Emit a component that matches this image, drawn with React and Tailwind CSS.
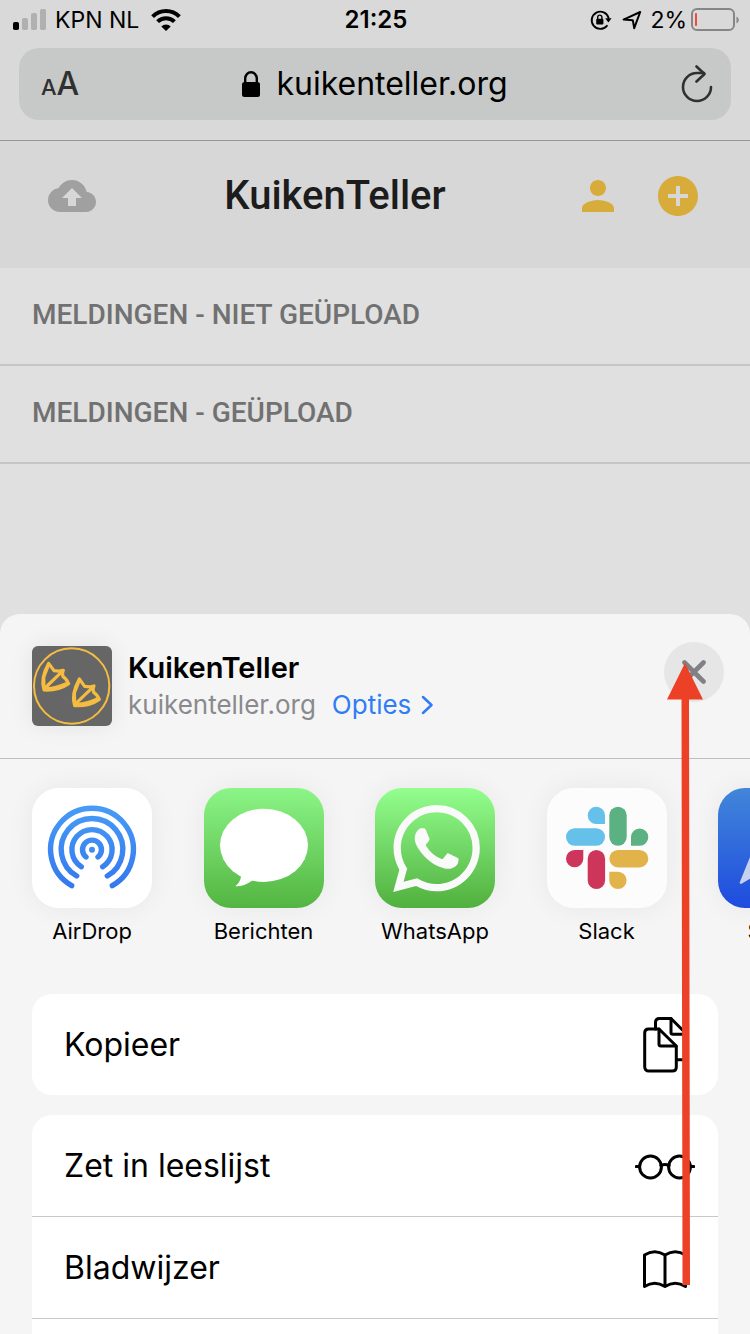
import { MdAddCircle, MdCloudUpload, MdPerson } from "react-icons/md";
import { SiWhatsapp } from "react-icons/si";

function StatusBar() {
  return (
    <div className="grid h-10 grid-cols-[1fr_auto_1fr] items-center pr-[11px] pl-[13px] text-[23px] text-black">
      <div className="flex items-center gap-2">
        <svg className="h-[22px] w-[34px]" viewBox="0 0 34 22" aria-hidden="true">
          <rect x="0" y="13" width="6" height="8" rx="1.8" />
          <g fill="#b0b0b0">
            <rect x="9" y="9" width="6" height="12" rx="1.8" />
            <rect x="18" y="4" width="6" height="17" rx="1.8" />
            <rect x="27" y="0" width="6" height="21" rx="1.8" />
          </g>
        </svg>
        <span>KPN NL</span>
        <svg className="ml-1 h-[22px] w-[30px]" viewBox="0 0 30 22" aria-hidden="true">
          <g fill="none" stroke="#000" strokeWidth="4">
            <path d="M1.6 7.6A19 19 0 0 1 28.4 7.6" />
            <path d="M6.6 12.6A12 12 0 0 1 23.4 12.6" />
          </g>
          <path d="M15 22L10.3 17.4A6.8 6.8 0 0 1 19.7 17.4Z" />
        </svg>
      </div>
      <span className="text-2xl font-semibold">21:25</span>
      <div className="flex items-center justify-end">
        <svg className="mr-2.5 h-[22px] w-[22px]" viewBox="0 0 22 22" aria-hidden="true">
          <path d="M16.9 16.8A8.6 8.6 0 1 1 18.6 9" fill="none" stroke="#000" strokeWidth="1.9" strokeLinecap="round" />
          <path d="M15.2 9.2h6.4l-3.2 4.4z" />
          <rect x="6.2" y="9.8" width="7.2" height="5.6" rx="1" />
          <path d="M7.7 10V8.2a2.1 2.1 0 0 1 4.2 0V10" fill="none" stroke="#000" strokeWidth="1.4" />
        </svg>
        <svg className="mr-2 h-5 w-5" viewBox="0 0 20 20" aria-hidden="true">
          <path d="M1.6 9.6L18.2 2L12.2 18.2L10.8 10.2Z" fill="none" stroke="#000" strokeWidth="2" strokeLinejoin="round" />
        </svg>
        <span className="mr-1">2%</span>
        <svg className="h-6 w-12" viewBox="0 0 48 24" aria-hidden="true">
          <rect x="1" y="1" width="42" height="21" rx="5" fill="none" stroke="#868686" strokeWidth="2" />
          <rect x="4" y="5" width="2" height="13" rx="0.8" fill="#ef4b3c" />
          <path d="M45.5 8.5c3 1.500 3 5.500 0 7z" fill="#868686" />
        </svg>
      </div>
    </div>
  );
}

function AddressBar() {
  return (
    <div className="border-b border-[#969696] px-[19px] pt-2 pb-5">
      <div className="grid h-[72px] grid-cols-[1fr_auto_1fr] items-center rounded-[20px] bg-[#c7c9c8] px-[18px]">
        <button type="button" aria-label="Tekstgrootte" className="flex items-baseline justify-self-start pl-1 font-medium text-[#303030]">
          <span className="text-[22px]">A</span>
          <span className="text-[32px]">A</span>
        </button>
        <div className="flex items-center gap-4 text-black">
          <svg className="h-[26px] w-[18px]" viewBox="0 0 18 26" aria-hidden="true">
            <rect x="0" y="11" width="18" height="15" rx="2.500" />
            <path d="M3.200 12V7.500a5.800 6.200 0 0 1 11.600 0V12" fill="none" stroke="#000" strokeWidth="2.400" />
          </svg>
          <span className="text-[32px]">kuikenteller.org</span>
        </div>
        <button type="button" aria-label="Vernieuw" className="justify-self-end">
          <svg className="h-[38px] w-8" viewBox="0 0 32 38" fill="none" stroke="#303030" strokeWidth="2.600" strokeLinecap="round" strokeLinejoin="round">
            <path d="M30 22A14 14 0 1 1 16 8H23" />
            <path d="M15.500 1.500L23.500 9L15.500 16.500" />
          </svg>
        </button>
      </div>
    </div>
  );
}

function WebPage() {
  return (
    <div className="font-[Roboto,sans-serif]">
      <header className="flex items-center justify-between bg-[#d7d7d7] px-12 pt-[31px] pb-12">
        <button type="button" aria-label="Upload">
          <MdCloudUpload className="size-12 text-[#a0a0a0]" />
        </button>
        <h1 className="text-[40px] leading-[48px] font-medium text-[#1c1c1c]">KuikenTeller</h1>
        <div className="flex gap-8 text-[#d8ac3b]">
          <button type="button" aria-label="Profiel">
            <MdPerson className="size-12" />
          </button>
          <button type="button" aria-label="Toevoegen">
            <MdAddCircle className="size-12" />
          </button>
        </div>
      </header>
      {["Meldingen - niet geüpload", "Meldingen - geüpload"].map((title) => (
        <h2 key={title} className="border-b-2 border-[#c6c6c6] px-8 pt-[31px] pb-[33px] text-[28px] leading-8 font-medium text-[#717171] uppercase">
          {title}
        </h2>
      ))}
    </div>
  );
}

const FOOT = "M50 52L66 74Q82 77 94 73Q89 82 93 92Q103 98 110 113Q80 134 36 132Q24 98 50 52Z";

function Foot() {
  return (
    <>
      <path d={FOOT} />
      <path d="M36 129L93 74M36 127Q62 131 104 112" />
      <path d="M37 130L36 94L49 60" strokeWidth="8" />
    </>
  );
}

function SiteLogo() {
  return (
    <svg className="mt-1 size-20 shrink-0 rounded-md shadow-[0_0_24px_rgba(0,0,0,0.08)]" viewBox="0 0 240 240" aria-hidden="true">
      <rect width="240" height="240" fill="#666" />
      <g fill="none" stroke="#f4bd41" strokeLinejoin="round" strokeWidth="9.500">
        <circle cx="119" cy="120" r="113" strokeWidth="6" />
        <Foot />
        <g transform="translate(92 47)">
          <Foot />
        </g>
      </g>
    </svg>
  );
}

function SheetHeader() {
  return (
    <div className="flex h-[145px] shrink-0 items-start border-b border-[#bdbdbf] pt-7 pr-[26px] pl-8">
      <SiteLogo />
      <div className="ml-4 flex-1 pt-1.5">
        <h2 className="text-[29px] leading-10 font-semibold text-black">KuikenTeller</h2>
        <div className="flex items-center gap-4 text-[26px] leading-[34px]">
          <span className="text-[#8a8a8e]">kuikenteller.org</span>
          <button type="button" className="flex items-center gap-2.5 text-[#2f7cf6]">
            Opties
            <svg className="h-5 w-3" viewBox="0 0 12 20" fill="none" stroke="currentColor" strokeWidth="2.500" strokeLinecap="round" strokeLinejoin="round" aria-hidden="true">
              <path d="M2 2L10.500 10L2 18" />
            </svg>
          </button>
        </div>
      </div>
      <button type="button" aria-label="Sluit" className="flex size-[60px] items-center justify-center rounded-full bg-[#e6e6e7]">
        <svg className="size-6" viewBox="0 0 24 24" stroke="#808085" strokeWidth="4.600" strokeLinecap="round" aria-hidden="true">
          <path d="M2.500 2.500L21.500 21.500M21.500 2.500L2.500 21.500" />
        </svg>
      </button>
    </div>
  );
}

function AirDropIcon() {
  return (
    <svg className="size-full" viewBox="0 0 120 120" aria-hidden="true">
      <defs>
        <linearGradient id="airdrop" gradientUnits="userSpaceOnUse" x1="0" y1="18" x2="0" y2="100">
          <stop offset="0" stopColor="#479bf7" />
          <stop offset="1" stopColor="#3478ee" />
        </linearGradient>
      </defs>
      <rect width="120" height="120" fill="#fff" />
      <g fill="none" stroke="url(#airdrop)" strokeWidth="5.400" strokeLinecap="round">
        <path d="M39.700 97.700A41.400 41.400 0 1 1 80.300 97.700" />
        <path d="M44.700 88A30.800 30.800 0 1 1 75.300 88" />
        <path d="M49.300 78.700A20.100 20.100 0 1 1 70.700 78.700" />
        <path d="M54 69A9.500 9.500 0 1 1 66 69" />
      </g>
      <circle cx="60" cy="61.700" r="3" fill="#3f8bf3" />
    </svg>
  );
}

function MessagesIcon() {
  return (
    <svg className="size-full" viewBox="0 0 120 120" aria-hidden="true">
      <defs>
        <linearGradient id="messages" x1="0" y1="0" x2="0" y2="1">
          <stop offset="0" stopColor="#8bf587" />
          <stop offset="1" stopColor="#53b541" />
        </linearGradient>
      </defs>
      <rect width="120" height="120" fill="url(#messages)" />
      <ellipse cx="60" cy="57.300" rx="44" ry="36.600" fill="#fff" />
      <path d="M35 84L37 88.500Q36.500 94 31.300 98.300Q39 99 48 92.800L56 88Z" fill="#fff" />
    </svg>
  );
}

function WhatsAppIcon() {
  return (
    <span className="flex size-full items-center justify-center bg-linear-to-b from-[#93ff8e] to-[#51b03d] pl-[3px]">
      <SiWhatsapp className="size-[87px] text-[#fafafa]" />
    </span>
  );
}

function SlackIcon() {
  return (
    <svg className="size-full" viewBox="0 0 120 120" aria-hidden="true">
      <rect width="120" height="120" fill="#fcfcfc" />
      <g fill="#65c1ea">
        <rect x="19" y="40.300" width="39" height="17.400" rx="8.700" />
        <path d="M58 36H49.300A8.650 8.650 0 1 1 58 27.400Z" />
      </g>
      <g fill="#5bb182">
        <rect x="62.300" y="18.700" width="17.400" height="39" rx="8.700" />
        <path d="M84 57.700V49A8.650 8.650 0 1 1 92.700 57.700Z" />
      </g>
      <g fill="#e2b34b">
        <rect x="62.300" y="62" width="39" height="17.400" rx="8.700" />
        <path d="M62.300 83.700H71A8.650 8.650 0 1 1 62.300 92.400Z" />
      </g>
      <g fill="#cd355b">
        <rect x="40.700" y="62" width="17.400" height="39" rx="8.700" />
        <path d="M36.300 62V70.700A8.650 8.650 0 1 1 27.600 62Z" />
      </g>
    </svg>
  );
}

function SparkIcon() {
  return (
    <svg className="size-full" viewBox="0 0 120 120" aria-hidden="true">
      <defs>
        <linearGradient id="spark" x1="0" y1="0" x2="0" y2="1">
          <stop offset="0" stopColor="#4286d9" />
          <stop offset="1" stopColor="#1e4bdf" />
        </linearGradient>
      </defs>
      <rect width="120" height="120" fill="url(#spark)" />
      <path d="M21.500 95L34 64L98 22L82 72L44 84L23 96Z" fill="#c6d1ef" />
    </svg>
  );
}

const APPS = [
  { name: "AirDrop", Icon: AirDropIcon },
  { name: "Berichten", Icon: MessagesIcon },
  { name: "WhatsApp", Icon: WhatsAppIcon },
  { name: "Slack", Icon: SlackIcon },
  { name: "Spark", Icon: SparkIcon },
];

function AppRow() {
  return (
    <div className="grid shrink-0 auto-cols-[25%] grid-flow-col overflow-hidden px-8 pt-[29px] pb-12">
      {APPS.map(({ name, Icon }) => (
        <button key={name} type="button" className="flex w-[120px] flex-col items-center gap-2 text-[22px] leading-[30px] text-black">
          <span className="size-[120px] overflow-hidden rounded-[27px] shadow-[0_0_28px_rgba(0,0,0,0.06)]">
            <Icon />
          </span>
          {name}
        </button>
      ))}
    </div>
  );
}

const ICONS = {
  copy: (
    <>
      <path d="M13.500 14H24L41.300 31V52Q41.300 56 37.300 56H14Q9.700 56 9.700 51.700V18Q9.700 14 13.500 14Z" />
      <path d="M24 14V29Q24 31 26 31H41" />
      <path d="M20.500 14V7.500Q20.500 3.500 24.500 3.500H36L52.500 20V41Q52.500 44.700 48.500 44.700H42" />
      <path d="M36 3.500V17.500Q36 19.200 38 19.200H52" />
    </>
  ),
  glasses: (
    <>
      <circle cx="15.500" cy="31" r="10.900" />
      <circle cx="44.500" cy="31" r="10.900" />
      <path d="M26 29.500Q30 27.500 34 29.500M1.300 30.500H4.500M55.500 30.500H58.700" />
    </>
  ),
  book: (
    <path d="M9.500 48.500V17Q19.700 10.500 30 17Q40.300 10.500 50.500 17V48.500Q40.300 42 30 48.500Q19.700 42 9.500 48.500ZM30 17V48" />
  ),
};

function Action({ label, icon }) {
  return (
    <button type="button" className="flex h-[101px] w-full items-center justify-between pr-[23px] pl-8 text-left text-[32px] text-black">
      {label}
      <svg className="size-[60px]" viewBox="0 0 60 60" fill="none" stroke="#000" strokeWidth="3" strokeLinecap="round" strokeLinejoin="round" aria-hidden="true">
        {ICONS[icon]}
      </svg>
    </button>
  );
}

function ShareSheet() {
  return (
    <section className="flex min-h-0 flex-1 flex-col rounded-t-[20px] bg-[#f5f5f5]">
      <SheetHeader />
      <AppRow />
      <div className="mx-8 mb-5 shrink-0 rounded-[20px] bg-white">
        <Action label="Kopieer" icon="copy" />
      </div>
      <ul className="mx-8 flex-1 rounded-t-[20px] bg-white">
        <li className="border-b border-[#c8c8ca]">
          <Action label="Zet in leeslijst" icon="glasses" />
        </li>
        <li className="border-b border-[#c8c8ca]">
          <Action label="Bladwijzer" icon="book" />
        </li>
      </ul>
    </section>
  );
}

export default function App() {
  return (
    <main className="relative flex h-screen flex-col overflow-hidden bg-[#e0e0e0] font-[Inter,sans-serif]">
      <div className="bg-[#d9d9d9]">
        <StatusBar />
        <AddressBar />
      </div>
      <WebPage />
      <div className="h-[150px] shrink-0" />
      <ShareSheet />
      <svg className="pointer-events-none absolute top-[663px] right-[47px] h-[623px] w-9" viewBox="0 0 36 623" aria-hidden="true">
        <path d="M18 0L36 36.500H22L23 622H15.500L14.500 36.500H0Z" fill="#ec4127" />
      </svg>
    </main>
  );
}
